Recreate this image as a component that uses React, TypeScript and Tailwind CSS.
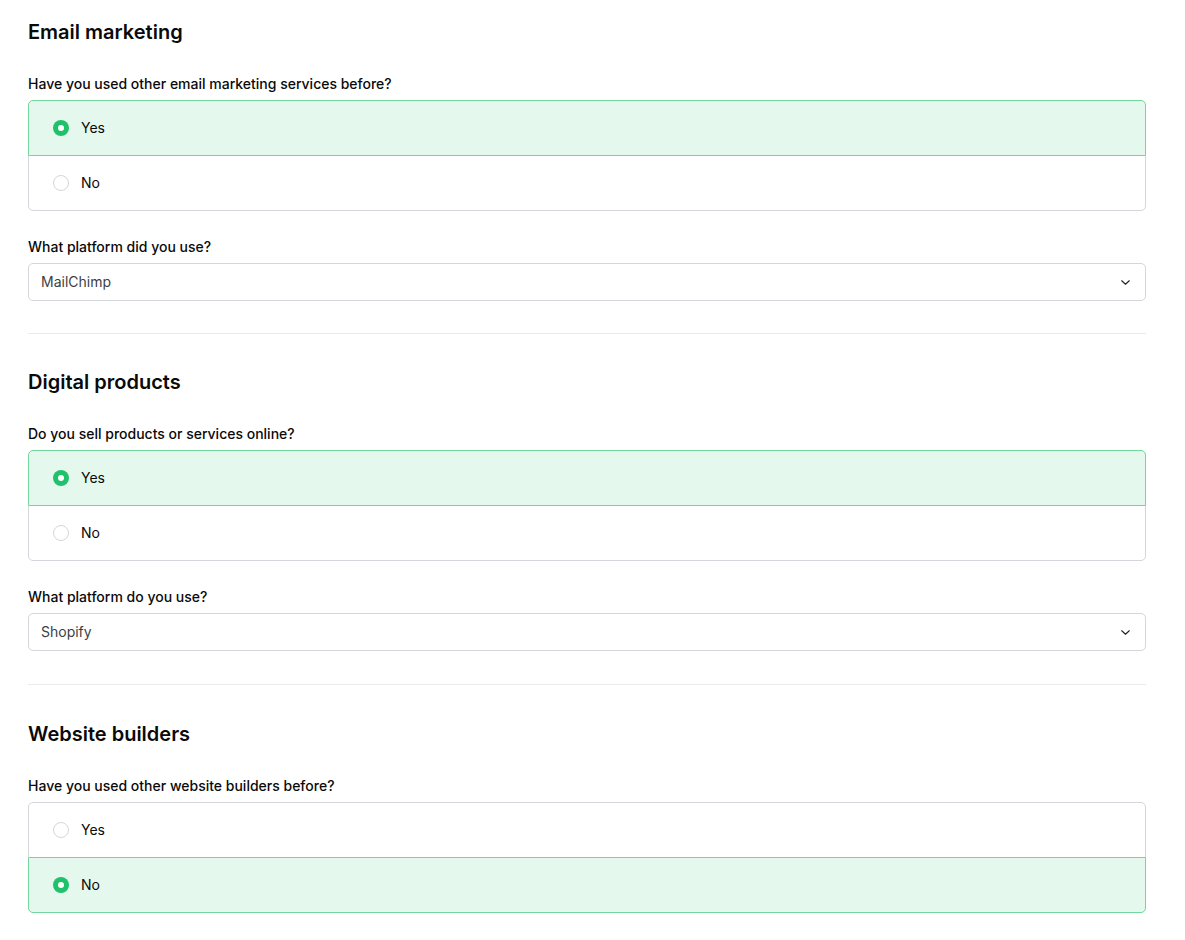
import React, { useState } from "react";

function Radio({ checked }: { checked: boolean }) {
  return checked ? (
    <span className="flex h-4 w-4 shrink-0 items-center justify-center rounded-full bg-[#1fc16b]">
      <span className="h-[6px] w-[6px] rounded-full bg-white" />
    </span>
  ) : (
    <span className="h-4 w-4 shrink-0 rounded-full border border-[#d4d6db] bg-white" />
  );
}

function RadioGroup({
  options,
  value,
  onChange,
}: {
  options: string[];
  value: string;
  onChange: (v: string) => void;
}) {
  return (
    <div className="flex flex-col">
      {options.map((o, i) => {
        const sel = o === value;
        const first = i === 0;
        const last = i === options.length - 1;
        return (
          <button
            key={o}
            type="button"
            onClick={() => onChange(o)}
            className={[
              "relative flex h-[56px] items-center gap-3 border px-6 text-left text-sm text-[#0a0a0a]",
              first ? "rounded-t-[5px]" : "-mt-px",
              last ? "rounded-b-[5px]" : "",
              sel ? "z-10 border-[#73d69c] bg-[#e5f8ee]" : "border-[#d4d6db] bg-white",
            ].join(" ")}
          >
            <Radio checked={sel} />
            <span className="leading-5">{o}</span>
          </button>
        );
      })}
    </div>
  );
}

function Select({ value }: { value: string }) {
  return (
    <div className="flex h-[38px] items-center justify-between rounded-[5px] border border-[#d4d6db] bg-white pl-3 pr-[15px] text-sm text-[#3b3f45]">
      <span>{value}</span>
      <svg width="9" height="5" viewBox="0 0 9 5" fill="none">
        <path d="M0.75 0.75l3.75 3.5 3.75-3.5" stroke="#222" strokeWidth="1.1" strokeLinecap="round" strokeLinejoin="round" />
      </svg>
    </div>
  );
}

function Section({
  title,
  question,
  value,
  onChange,
  options,
  selectLabel,
  selectValue,
}: {
  title: string;
  question: string;
  value: string;
  onChange: (v: string) => void;
  options: string[];
  selectLabel?: string;
  selectValue?: string;
}) {
  return (
    <section className="flex flex-col">
      <h2 className="text-[20px] font-semibold leading-8 text-[#0a0a0a]">{title}</h2>
      <div className="mt-[26px] mb-[6px] text-sm font-medium leading-5 text-[#0a0a0a]">{question}</div>
      <RadioGroup options={options} value={value} onChange={onChange} />
      {selectLabel && (
        <>
          <div className="mt-[26px] mb-[6px] text-sm font-medium leading-5 text-[#0a0a0a]">{selectLabel}</div>
          <Select value={selectValue || ""} />
        </>
      )}
    </section>
  );
}

export default function App() {
  const [a, setA] = useState("Yes");
  const [b, setB] = useState("Yes");
  const [c, setC] = useState("No");
  return (
    <div
      className="min-h-screen bg-white"
      style={{ fontFamily: "Inter, 'Noto Sans', sans-serif" }}
    >
      <div className="ml-[28px] w-[1118px] pt-4">
        <Section
          title="Email marketing"
          question="Have you used other email marketing services before?"
          options={["Yes", "No"]}
          value={a}
          onChange={setA}
          selectLabel="What platform did you use?"
          selectValue="MailChimp"
        />
        <div className="mt-8 mb-[32px] h-px bg-[#ebebeb]" />
        <Section
          title="Digital products"
          question="Do you sell products or services online?"
          options={["Yes", "No"]}
          value={b}
          onChange={setB}
          selectLabel="What platform do you use?"
          selectValue="Shopify"
        />
        <div className="mt-[33px] mb-[33px] h-px bg-[#ebebeb]" />
        <Section
          title="Website builders"
          question="Have you used other website builders before?"
          options={["Yes", "No"]}
          value={c}
          onChange={setC}
        />
      </div>
    </div>
  );
}
